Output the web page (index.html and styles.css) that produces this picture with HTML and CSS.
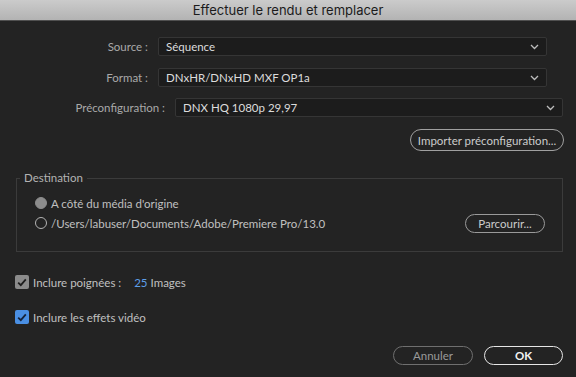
FILE: index.html
```html
<!DOCTYPE html>
<html lang="fr">
<head>
<meta charset="utf-8">
<link rel="stylesheet" href="styles.css">
</head>
<body>
<div class="title">Effectuer le rendu et remplacer</div>
<div class="content">
  <div class="row">
    <span class="lbl lbl-short">Source :</span>
    <div class="select sel-short"><span>Séquence</span><svg class="chev" width="9" height="6" viewBox="0 0 9 6"><path d="M1 1 L4.5 4.5 L8 1" fill="none" stroke="#bdbdbd" stroke-width="1.3"/></svg></div>
  </div>
  <div class="row">
    <span class="lbl lbl-short">Format :</span>
    <div class="select sel-short"><span>DNxHR/DNxHD MXF OP1a</span><svg class="chev" width="9" height="6" viewBox="0 0 9 6"><path d="M1 1 L4.5 4.5 L8 1" fill="none" stroke="#bdbdbd" stroke-width="1.3"/></svg></div>
  </div>
  <div class="row row3">
    <span class="lbl lbl-long">Préconfiguration :</span>
    <div class="select sel-long"><span>DNX HQ 1080p 29,97</span><svg class="chev" width="9" height="6" viewBox="0 0 9 6"><path d="M1 1 L4.5 4.5 L8 1" fill="none" stroke="#bdbdbd" stroke-width="1.3"/></svg></div>
  </div>
  <div class="import-row">
    <button class="pill import">Importer préconfiguration...</button>
  </div>
  <fieldset class="dest">
    <legend>Destination</legend>
    <div class="radio-row">
      <span class="radio filled"></span><span class="opt">A côté du média d'origine</span>
    </div>
    <div class="radio-row">
      <span class="radio"></span><span class="opt">/Users/labuser/Documents/Adobe/Premiere Pro/13.0</span>
      <button class="pill browse">Parcourir...</button>
    </div>
  </fieldset>
  <div class="check-row first">
    <span class="check gray"><svg width="10" height="9" viewBox="0 0 10 9"><path d="M1.2 4.6 L3.8 7.2 L8.8 1.4" fill="none" stroke="#1e1e1e" stroke-width="1.8"/></svg></span>
    <span class="opt">Inclure poignées :</span>
    <span class="num">25</span><span class="opt">Images</span>
  </div>
  <div class="check-row second">
    <span class="check blue"><svg width="10" height="9" viewBox="0 0 10 9"><path d="M1.2 4.6 L3.8 7.2 L8.8 1.4" fill="none" stroke="#15233a" stroke-width="1.8"/></svg></span>
    <span class="opt">Inclure les effets vidéo</span>
  </div>
  <div class="actions">
    <button class="pill cancel">Annuler</button>
    <button class="pill ok">OK</button>
  </div>
</div>
</body>
</html>
```
FILE: styles.css
```css
* { box-sizing: border-box; }
html, body {
  margin: 0;
  padding: 0;
  background: #232323;
  font-family: "Lato", "Open Sans", sans-serif;
  font-size: 11.5px;
  color: #bdbdbd;
  width: 576px;
  height: 377px;
  overflow: hidden;
}
.title {
  height: 21px;
  background: linear-gradient(#cbcbcb, #b3b3b3);
  border-bottom: 1px solid #505050;
  color: #1b1b1b;
  font-family: "Inter", "Liberation Sans", sans-serif;
  font-size: 13px;
  line-height: 20px;
  text-align: center;
}
.content {
  padding-top: 16px;
}
.row {
  display: flex;
  align-items: center;
  height: 19px;
  margin-bottom: 12px;
}
.row3 { margin-top: -1px; margin-bottom: 0; }
.lbl {
  text-align: right;
  color: #a9a9a9;
  padding-right: 10px;
}
.lbl-short { width: 158px; }
.lbl-long { width: 175px; }
.select {
  height: 19px;
  background: #1c1c1c;
  border: 1px solid #353535;
  border-radius: 2px;
  display: flex;
  align-items: center;
  justify-content: space-between;
  padding: 0 7px 0 7px;
  color: #dcdcdc;
}
.sel-short { width: 389px; }
.sel-long { width: 388px; }
.chev { flex: none; }
.import-row {
  display: flex;
  justify-content: flex-end;
  padding-right: 12px;
  margin-top: 12px;
}
.pill {
  font-family: inherit;
  font-size: 11.5px;
  background: transparent;
  border-radius: 11px;
  padding: 0;
  margin: 0;
  display: inline-flex;
  align-items: center;
  justify-content: center;
}
.import {
  width: 154px;
  height: 22px;
  border: 1.5px solid #a0a0a0;
  color: #cbcbcb;
}
.dest {
  margin: 20px 13px 0 16px;
  padding: 8px 17px 18px 18px;
  border: 1px solid #3b3b3b;
  min-width: 0;
}
.dest legend {
  margin-left: -15px;
  padding: 0 4px;
  line-height: 14px;
  color: #b3b3b3;
}
.radio-row {
  display: flex;
  align-items: center;
  height: 20px;
}
.radio {
  width: 12px;
  height: 12px;
  border-radius: 50%;
  border: 1.5px solid #b3b3b3;
  margin-right: 4px;
  flex: none;
}
.radio.filled {
  background: #8c8c8c;
  border-color: #8c8c8c;
}
.opt { color: #c0c0c0; }
.browse {
  margin-left: auto;
  width: 80px;
  height: 19px;
  border: 1.5px solid #9a9a9a;
  color: #cbcbcb;
}
.check-row {
  display: flex;
  align-items: center;
  height: 16px;
  padding-left: 15px;
}
.check-row.first { margin-top: 22px; }
.check-row.second { margin-top: 19px; }
.check {
  width: 14px;
  height: 14px;
  border-radius: 2px;
  margin-right: 4px;
  display: flex;
  align-items: center;
  justify-content: center;
  flex: none;
}
.check.gray { background: #8b8b8b; }
.check.blue { background: #4a8fe3; }
.num {
  color: #5d9ee8;
  margin-left: 13px;
  margin-right: 3px;
}
.actions {
  display: flex;
  justify-content: flex-end;
  gap: 11px;
  padding-right: 13px;
  margin-top: 21px;
}
.cancel {
  width: 80px;
  height: 19px;
  border: 1.5px solid #6f6f6f;
  color: #9a9a9a;
}
.ok {
  width: 79px;
  height: 19px;
  border: 1.5px solid #e6e6e6;
  color: #f2f2f2;
  font-weight: bold;
}
```
